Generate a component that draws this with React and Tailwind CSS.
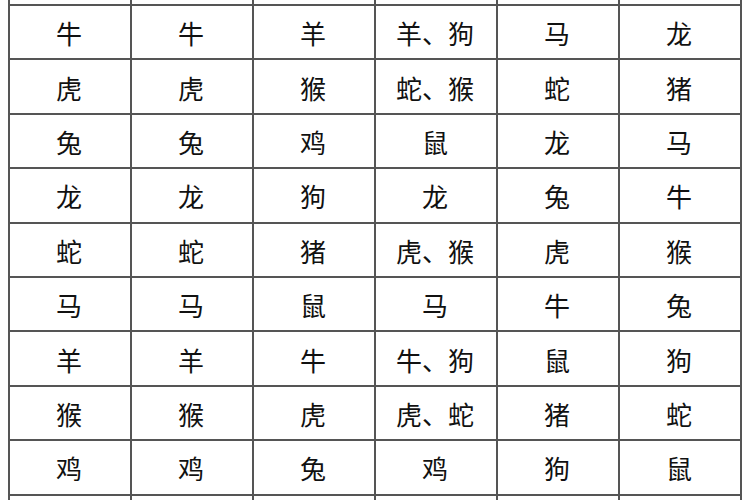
import React from "react";

const rows = [
  ["牛", "牛", "羊", "羊、狗", "马", "龙"],
  ["虎", "虎", "猴", "蛇、猴", "蛇", "猪"],
  ["兔", "兔", "鸡", "鼠", "龙", "马"],
  ["龙", "龙", "狗", "龙", "兔", "牛"],
  ["蛇", "蛇", "猪", "虎、猴", "虎", "猴"],
  ["马", "马", "鼠", "马", "牛", "兔"],
  ["羊", "羊", "牛", "牛、狗", "鼠", "狗"],
  ["猴", "猴", "虎", "虎、蛇", "猪", "蛇"],
  ["鸡", "鸡", "兔", "鸡", "狗", "鼠"],
];

export default function App() {
  const cells = [];
  for (let i = 0; i < 6; i++) cells.push(<div key={"t" + i} className="bg-white" />);
  rows.forEach((r, ri) =>
    r.forEach((c, ci) =>
      cells.push(
        <div
          key={ri + "-" + ci}
          className="bg-white flex items-center justify-center text-[26px] leading-none text-[#111111] pt-[2px] pr-[2px]"
        >
          {c}
        </div>
      )
    )
  );
  for (let i = 0; i < 6; i++) cells.push(<div key={"b" + i} className="bg-white" />);

  return (
    <div
      className="w-[750px] h-[500px] overflow-hidden bg-white"
      style={{ fontFamily: '"Noto Sans CJK SC", sans-serif' }}
    >
      <div className="ml-[8px] w-[734px] grid grid-cols-[repeat(6,120px)] grid-rows-[4px_repeat(9,52.4px)_10px] gap-[2px] px-[2px] bg-[#555555]">
        {cells}
      </div>
    </div>
  );
}
